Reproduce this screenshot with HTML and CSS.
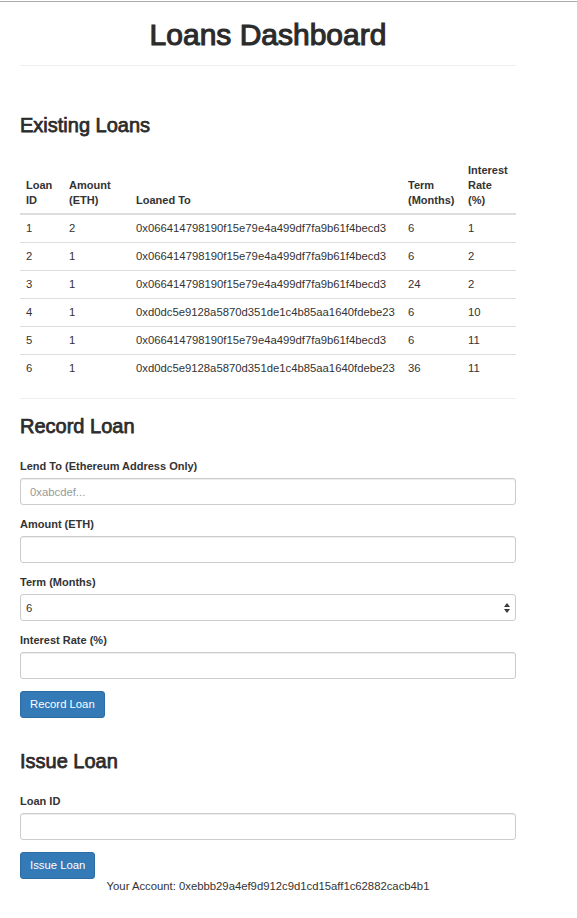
FILE: index.html
```html
<!DOCTYPE html>
<html lang="en">
<head>
<meta charset="utf-8">
<title>Loans Dashboard</title>
<link rel="stylesheet" href="styles.css">
</head>
<body>
<div class="page">
  <div class="container">
    <h1 class="title">Loans Dashboard</h1>
    <hr class="rule">

    <section class="section section-first">
      <h3 class="heading">Existing Loans</h3>
      <table class="loans">
        <thead>
          <tr>
            <th class="c-id">Loan<br>ID</th>
            <th class="c-amt">Amount<br>(ETH)</th>
            <th class="c-to">Loaned To</th>
            <th class="c-term">Term<br>(Months)</th>
            <th class="c-rate">Interest<br>Rate<br>(%)</th>
          </tr>
        </thead>
        <tbody>
          <tr><td>1</td><td>2</td><td>0x066414798190f15e79e4a499df7fa9b61f4becd3</td><td>6</td><td>1</td></tr>
          <tr><td>2</td><td>1</td><td>0x066414798190f15e79e4a499df7fa9b61f4becd3</td><td>6</td><td>2</td></tr>
          <tr><td>3</td><td>1</td><td>0x066414798190f15e79e4a499df7fa9b61f4becd3</td><td>24</td><td>2</td></tr>
          <tr><td>4</td><td>1</td><td>0xd0dc5e9128a5870d351de1c4b85aa1640fdebe23</td><td>6</td><td>10</td></tr>
          <tr><td>5</td><td>1</td><td>0x066414798190f15e79e4a499df7fa9b61f4becd3</td><td>6</td><td>11</td></tr>
          <tr><td>6</td><td>1</td><td>0xd0dc5e9128a5870d351de1c4b85aa1640fdebe23</td><td>36</td><td>11</td></tr>
        </tbody>
      </table>
    </section>

    <hr class="rule rule-mid">

    <section class="section section-record">
      <h3 class="heading">Record Loan</h3>
      <form class="form">
        <div class="form-group">
          <label class="label" for="lendTo">Lend To (Ethereum Address Only)</label>
          <input class="control" id="lendTo" type="text" placeholder="0xabcdef...">
        </div>
        <div class="form-group">
          <label class="label" for="amount">Amount (ETH)</label>
          <input class="control" id="amount" type="text">
        </div>
        <div class="form-group">
          <label class="label" for="term">Term (Months)</label>
          <div class="select-wrap">
            <select class="control select" id="term">
              <option>6</option>
              <option>12</option>
              <option>24</option>
              <option>36</option>
            </select>
            <svg class="select-arrows" width="6" height="10" viewBox="0 0 6 10" aria-hidden="true">
              <path d="M3 0 L6 4 L0 4 Z" fill="#3a3a3a"/>
              <path d="M0 6 L6 6 L3 10 Z" fill="#3a3a3a"/>
            </svg>
          </div>
        </div>
        <div class="form-group">
          <label class="label" for="rate">Interest Rate (%)</label>
          <input class="control" id="rate" type="text">
        </div>
        <button class="btn" type="button">Record Loan</button>
      </form>
    </section>

    <section class="section section-issue">
      <h3 class="heading">Issue Loan</h3>
      <form class="form">
        <div class="form-group">
          <label class="label" for="loanId">Loan ID</label>
          <input class="control" id="loanId" type="text">
        </div>
        <button class="btn" type="button">Issue Loan</button>
      </form>
      <p class="account">Your Account: 0xebbb29a4ef9d912c9d1cd15aff1c62882cacb4b1</p>
    </section>
  </div>
</div>
</body>
</html>
```

FILE: styles.css
```css
* {
  box-sizing: border-box;
}

html,
body {
  margin: 0;
  padding: 0;
  background: #fff;
}

body {
  font-family: "Liberation Sans", Arial, Helvetica, sans-serif;
  font-size: 11.3px;
  line-height: 15px;
  color: #333;
  padding-top: 1px;
}

.page {
  border-top: 1px solid #ababab;
}

.container {
  width: 496px;
  margin-left: 20px;
}

.title {
  margin: 16px 0 0;
  font-size: 30px;
  line-height: 33px;
  font-weight: normal;
  -webkit-text-stroke: 1.1px #2b2b2b;
  text-align: center;
  color: #2b2b2b;
}

.rule {
  height: 0;
  margin: 14px 0 0;
  border: 0;
  border-top: 1px solid #eee;
}

.rule-mid {
  margin-top: 16px;
}

.section-first {
  margin-top: 48px;
}

.section-record {
  margin-top: 16px;
}

.section-issue {
  margin-top: 32px;
}

.heading {
  margin: 0 0 22px;
  font-size: 20px;
  line-height: 22px;
  font-weight: normal;
  -webkit-text-stroke: 0.75px #2b2b2b;
  color: #2b2b2b;
}

.section-first .heading {
  margin-bottom: 21px;
}

/* table */
.loans {
  width: 100%;
  table-layout: fixed;
  border-collapse: separate;
  border-spacing: 0;
  margin-bottom: 16px;
}

.c-id { width: 43px; }
.c-amt { width: 67px; }
.c-to { width: 272px; }
.c-term { width: 60px; }
.c-rate { width: 54px; }

.loans th {
  padding: 6px 6px 5px;
  font-size: 11px;
  line-height: 15px;
  font-weight: bold;
  text-align: left;
  vertical-align: bottom;
  border-bottom: 2px solid #ddd;
}

.loans td {
  padding: 6px;
  line-height: 15px;
  border-top: 1px solid #ddd;
  white-space: nowrap;
  vertical-align: top;
}

.loans tbody tr:first-child td {
  border-top: 0;
}

/* forms */
.form {
  margin: 0;
}

.form-group {
  margin-bottom: 12px;
}

.label {
  display: block;
  margin-bottom: 4px;
  font-size: 11px;
  line-height: 15px;
  font-weight: bold;
}

.control {
  display: block;
  width: 100%;
  height: 27px;
  padding: 0 9px;
  font-family: inherit;
  font-size: 11.3px;
  color: #555;
  background: #fff;
  border: 1px solid #ccc;
  border-radius: 3px;
  box-shadow: inset 0 1px 1px rgba(0, 0, 0, 0.075);
  outline: none;
}

.control::placeholder {
  color: #999;
}

.select-wrap {
  position: relative;
}

.select {
  -webkit-appearance: none;
  appearance: none;
  padding-left: 5px;
  color: #333;
  box-shadow: none;
}

.select-arrows {
  position: absolute;
  right: 6px;
  top: 9px;
  pointer-events: none;
}

.btn {
  display: inline-block;
  height: 27px;
  padding: 0 9px;
  font-family: inherit;
  font-size: 11.3px;
  line-height: 25px;
  color: #fff;
  background: #337ab7;
  border: 1px solid #2e6da4;
  border-radius: 3px;
  vertical-align: top;
}

.account {
  margin: 0;
  text-align: center;
  line-height: 15px;
}
```
